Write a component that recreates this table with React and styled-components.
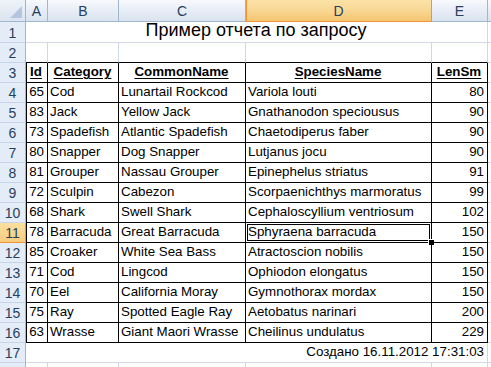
import React from 'react';
import styled, { createGlobalStyle } from 'styled-components';

const GRID = '#d0d7e5';
const HEAD_LINE = '#9eb6ce';
const ORANGE_LINE = '#f29436';

const COLUMNS = ['A', 'B', 'C', 'D', 'E'];
const ACTIVE_COL = 'D';
const ACTIVE_ROW = 11;

const fish = [
  [65, 'Cod', 'Lunartail Rockcod', 'Variola louti', 80],
  [83, 'Jack', 'Yellow Jack', 'Gnathanodon speciousus', 90],
  [73, 'Spadefish', 'Atlantic Spadefish', 'Chaetodiperus faber', 90],
  [80, 'Snapper', 'Dog Snapper', 'Lutjanus jocu', 90],
  [81, 'Grouper', 'Nassau Grouper', 'Epinephelus striatus', 91],
  [72, 'Sculpin', 'Cabezon', 'Scorpaenichthys marmoratus', 99],
  [68, 'Shark', 'Swell Shark', 'Cephaloscyllium ventriosum', 102],
  [78, 'Barracuda', 'Great Barracuda', 'Sphyraena barracuda', 150],
  [85, 'Croaker', 'White Sea Bass', 'Atractoscion nobilis', 150],
  [71, 'Cod', 'Lingcod', 'Ophiodon elongatus', 150],
  [70, 'Eel', 'California Moray', 'Gymnothorax mordax', 150],
  [75, 'Ray', 'Spotted Eagle Ray', 'Aetobatus narinari', 200],
  [63, 'Wrasse', 'Giant Maori Wrasse', 'Cheilinus undulatus', 229],
];

const headers = ['Id', 'Category', 'CommonName', 'SpeciesName', 'LenSm'];
const aligns = ['right', 'left', 'left', 'left', 'right'];

// Sheet App
const App = () => {
  return (
    <>
      <GlobalStyle />
      <Sheet>
        <Corner>
          <svg width="14" height="14" viewBox="0 0 14 14">
            <polygon points="13,1 13,13 1,13" fill="#b4c6dd" />
          </svg>
        </Corner>
        {COLUMNS.map(c => (
          <ColHeader key={c} $active={c === ACTIVE_COL}>{c}</ColHeader>
        ))}
        <ColHeader />

        {/* row 1: title */}
        <RowHeader>1</RowHeader>
        <Cell $span={5} $align="center" $title>Пример отчета по запросу</Cell>
        <Cell />

        {/* row 2: empty, its bottom is the table top */}
        <RowHeader>2</RowHeader>
        {COLUMNS.map(c => <Cell key={c} $bottom="#000" />)}
        <Cell />

        {/* row 3: table header */}
        <RowHeader>3</RowHeader>
        {headers.map((h, i) => (
          <Cell key={h} $table $first={i === 0} $align="center">
            <HeadLabel>{h}</HeadLabel>
          </Cell>
        ))}
        <Cell />

        {fish.map((row, r) => {
          const rowNo = r + 4;
          return (
            <React.Fragment key={rowNo}>
              <RowHeader $active={rowNo === ACTIVE_ROW}>{rowNo}</RowHeader>
              {row.map((v, i) => (
                <Cell key={i} $table $first={i === 0} $align={aligns[i]}>
                  {v}
                  {rowNo === ACTIVE_ROW && COLUMNS[i] === ACTIVE_COL && (
                    <ActiveFrame>
                      <FillHandle />
                    </ActiveFrame>
                  )}
                </Cell>
              ))}
              <Cell />
            </React.Fragment>
          );
        })}

        {/* row 17: footer */}
        <RowHeader>17</RowHeader>
        <Cell $span={5} $align="right">Создано 16.11.2012 17:31:03</Cell>
        <Cell />

        {/* row 18 is only a sliver at the bottom edge */}
        <RowHeader />
        {COLUMNS.map(c => <Cell key={c} />)}
        <Cell />
      </Sheet>
    </>
  );
};

export default App;

// Styled components

const GlobalStyle = createGlobalStyle`
  html, body {
    margin: 0;
    padding: 0;
    background: #ffffff;
    overflow: hidden;
  }
`;

const Sheet = styled.div`
  display: grid;
  grid-template-columns: 26px 22px 71px 127px 186px 56px 1fr;
  grid-template-rows: 22px 21px repeat(17, 20px);
  width: 491px;
  height: 367px;
  overflow: hidden;
  font-family: "Liberation Sans", Arial, sans-serif;
  font-size: 13.33px;
  color: #000;
`;

const Corner = styled.div`
  box-sizing: border-box;
  display: flex;
  align-items: flex-end;
  justify-content: flex-end;
  padding: 0 2px 2px 0;
  background: linear-gradient(to bottom, #eef3f9, #dbe4f0);
  border-right: 1px solid ${HEAD_LINE};
  border-bottom: 1px solid ${HEAD_LINE};
`;

const ColHeader = styled.div`
  box-sizing: border-box;
  display: flex;
  align-items: center;
  justify-content: center;
  padding-top: 1px;
  font-size: 14px;
  color: #27405f;
  background: ${p => p.$active
    ? 'linear-gradient(to bottom, #fbe2a9 0%, #f9d793 50%, #f4c670 100%)'
    : 'linear-gradient(to bottom, #f7f9fc 0%, #e7edf6 50%, #dae3ef 100%)'};
  border-right: 1px solid ${p => (p.$active ? ORANGE_LINE : HEAD_LINE)};
  border-bottom: 1px solid ${p => (p.$active ? ORANGE_LINE : HEAD_LINE)};
  ${p => p.$active && `box-shadow: inset 1px 0 0 ${ORANGE_LINE};`}
`;

const RowHeader = styled.div`
  box-sizing: border-box;
  display: flex;
  align-items: center;
  justify-content: center;
  padding-top: 1px;
  font-size: 14px;
  color: #27405f;
  background: ${p => (p.$active
    ? 'linear-gradient(to bottom, #fbdfa0, #f6cd7e)'
    : '#e4ecf7')};
  border-right: 1px solid ${p => (p.$active ? ORANGE_LINE : HEAD_LINE)};
  border-bottom: 1px solid ${p => (p.$active ? ORANGE_LINE : '#c5d4e8')};
`;

const Cell = styled.div`
  position: relative;
  box-sizing: border-box;
  display: flex;
  align-items: flex-end;
  justify-content: ${p => (p.$align === 'right' ? 'flex-end' : p.$align === 'center' ? 'center' : 'flex-start')};
  grid-column: span ${p => p.$span || 1};
  padding: 0 3px 2px 2px;
  white-space: nowrap;
  line-height: ${p => (p.$title ? '20px' : '16px')};
  font-size: ${p => (p.$title ? '18px' : '13.33px')};
  border-right: 1px solid ${p => (p.$table ? '#000' : GRID)};
  border-bottom: 1px solid ${p => p.$bottom || (p.$table ? '#000' : GRID)};
  ${p => p.$first && 'box-shadow: inset 1px 0 0 #000;'}
`;

const HeadLabel = styled.span`
  font-weight: bold;
  text-decoration: underline;
  text-underline-offset: 2px;
`;

const ActiveFrame = styled.div`
  position: absolute;
  top: -1px;
  left: -1px;
  right: -1px;
  bottom: -1px;
  border: 1px solid #000;
  box-shadow: inset 0 0 0 1px #fff, inset 0 0 0 2px #000;
  pointer-events: none;
`;

const FillHandle = styled.div`
  position: absolute;
  right: -4px;
  bottom: -4px;
  width: 5px;
  height: 5px;
  background: #000;
  border: 1px solid #fff;
`;
